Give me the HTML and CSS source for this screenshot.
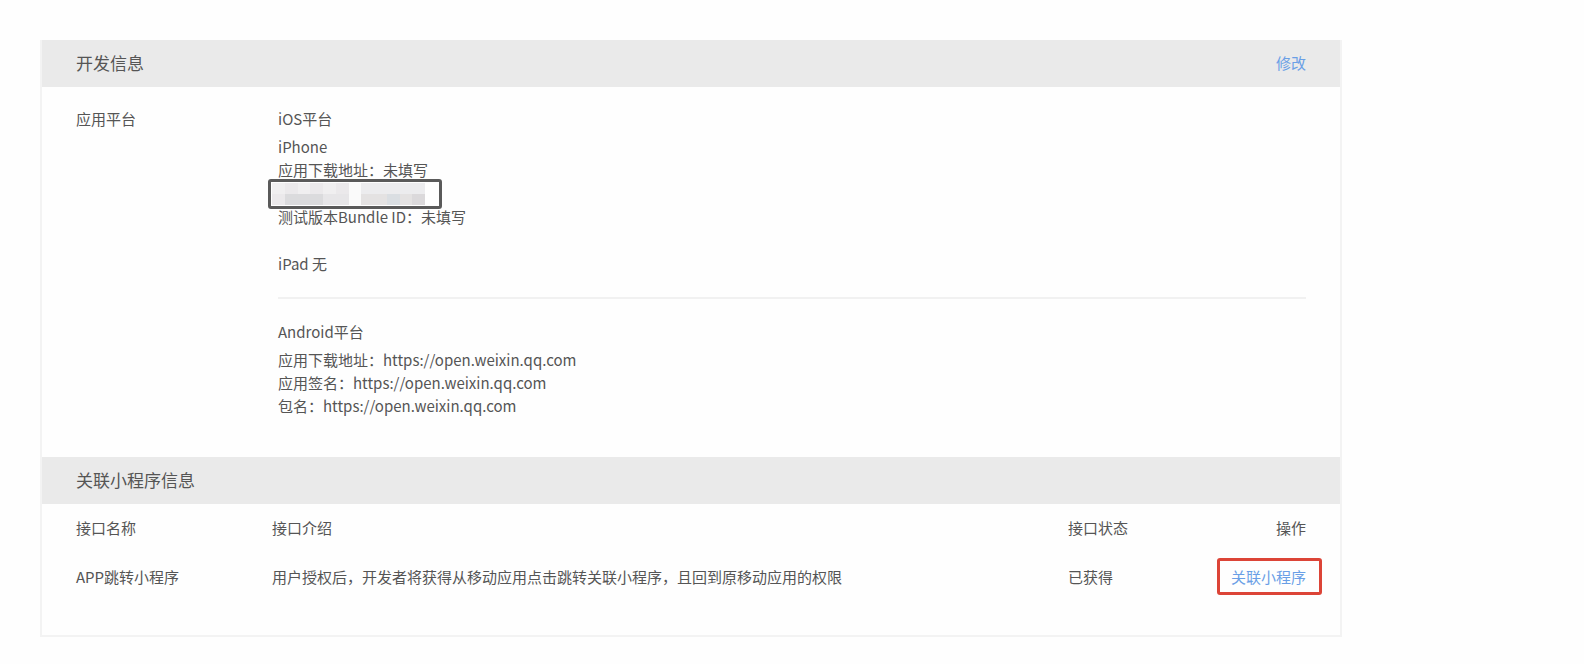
FILE: index.html
```html
<!DOCTYPE html>
<html lang="zh-CN">
<head>
<meta charset="utf-8">
<title>开发信息</title>
<link rel="stylesheet" href="styles.css">
</head>
<body>
<main class="panel">
  <section>
    <header class="panel-head">
      <h2 class="panel-title">开发信息</h2>
      <a class="link" href="#edit">修改</a>
    </header>
    <div class="platforms">
      <h3 class="label">应用平台</h3>
      <div class="platform-list">
        <div class="platform">
          <h4 class="platform-name">iOS平台</h4>
          <p class="line">iPhone</p>
          <p class="line">应用下载地址：未填写</p>
          <div class="line masked">
            <div class="mask-frame">
              <svg class="mosaic" viewBox="0 0 12 2" preserveAspectRatio="none" shape-rendering="crispEdges" aria-hidden="true">
                <path fill="#f0eff0" d="M0 0h6v1H0z"/>
                <path fill="#ebe9eb" d="M1 0h1v1H1zM3 0h1v1H3zM5 0h1v1H5zM0 1h1v1H0z"/>
                <path fill="#dbdbdd" d="M1 1h3v1H1z"/>
                <path fill="#e7e6e8" d="M4 1h2v1H4z"/>
                <path fill="#fafafa" d="M6 0h1v2H6z"/>
                <path fill="#ececee" d="M7 0h5v1H7z"/>
                <path fill="#e4e2e2" d="M7 1h2v1H7zM10 1h1v1h-1z"/>
                <path fill="#dadee2" d="M9 1h1v1H9z"/>
                <path fill="#dbd9db" d="M11 1h1v1h-1z"/>
              </svg>
            </div>
          </div>
          <p class="line">测试版本Bundle ID：未填写</p>
          <p class="line spaced">iPad 无</p>
        </div>
        <div class="platform">
          <h4 class="platform-name">Android平台</h4>
          <p class="line">应用下载地址：https://open.weixin.qq.com</p>
          <p class="line">应用签名：https://open.weixin.qq.com</p>
          <p class="line">包名：https://open.weixin.qq.com</p>
        </div>
      </div>
    </div>
  </section>
  <section>
    <header class="panel-head">
      <h2 class="panel-title">关联小程序信息</h2>
    </header>
    <div class="table-wrap">
      <table class="api-table">
        <thead>
          <tr><th class="col-name">接口名称</th><th>接口介绍</th><th class="col-state">接口状态</th><th class="col-action">操作</th></tr>
        </thead>
        <tbody>
          <tr>
            <td>APP跳转小程序</td>
            <td>用户授权后，开发者将获得从移动应用点击跳转关联小程序，且回到原移动应用的权限</td>
            <td>已获得</td>
            <td class="col-action"><a class="link marked" href="#associate">关联小程序</a></td>
          </tr>
        </tbody>
      </table>
    </div>
  </section>
</main>
</body>
</html>
```
FILE: styles.css
```css
* { box-sizing: border-box; }

body {
  margin: 0;
  padding: 40px 242px 28px 40px;
  background: #fefefe;
  color: #555;
  font: 15px/23px "Noto Sans CJK SC", sans-serif;
}

h2, h3, h4, p { margin: 0; font-weight: 400; }

.panel {
  border: solid #f3f3f3;
  border-width: 0 2px 2px;
}

.panel-head {
  display: flex;
  align-items: flex-start;
  justify-content: space-between;
  padding: 11px 34px 12px;
  background: #eaeaea;
}

.panel-title { font-size: 17px; line-height: 24px; }

.link { color: #6a9fe6; text-decoration: none; }

.platforms {
  display: flex;
  padding: 20px 34px 40px;
}

.label { width: 202px; font-size: 15px; }

.platform-list { flex: 1; }

.platform + .platform {
  margin-top: 22px;
  padding-top: 21px;
  border-top: 2px solid #f1f1f1;
}

.platform-name { margin-bottom: 5px; font-size: 15px; }

.spaced { margin-top: 24px; }

.masked { position: relative; height: 24px; }

.mask-frame {
  position: absolute;
  top: -2px;
  left: -10px;
  width: 174px;
  height: 30px;
  padding: 1px 14px 1px 1px;
  border: 3px solid #5a5a5a;
  border-radius: 3px;
  background: #fefefe;
}

.mosaic { display: block; width: 100%; height: 100%; }

.table-wrap { padding: 0 34px 33px; }

.api-table {
  width: 100%;
  border-collapse: collapse;
  table-layout: fixed;
}

.api-table th, .api-table td {
  padding: 12px 0 14px;
  font-weight: 400;
  text-align: left;
}

.api-table .col-name { width: 196px; }
.api-table .col-state { width: 119px; }
.api-table .col-action { width: 119px; text-align: right; }

.marked { position: relative; }

.marked::after {
  content: "";
  position: absolute;
  inset: -8px -16px -8px -14px;
  border: 3px solid #dc4437;
  border-radius: 3px;
}
```
